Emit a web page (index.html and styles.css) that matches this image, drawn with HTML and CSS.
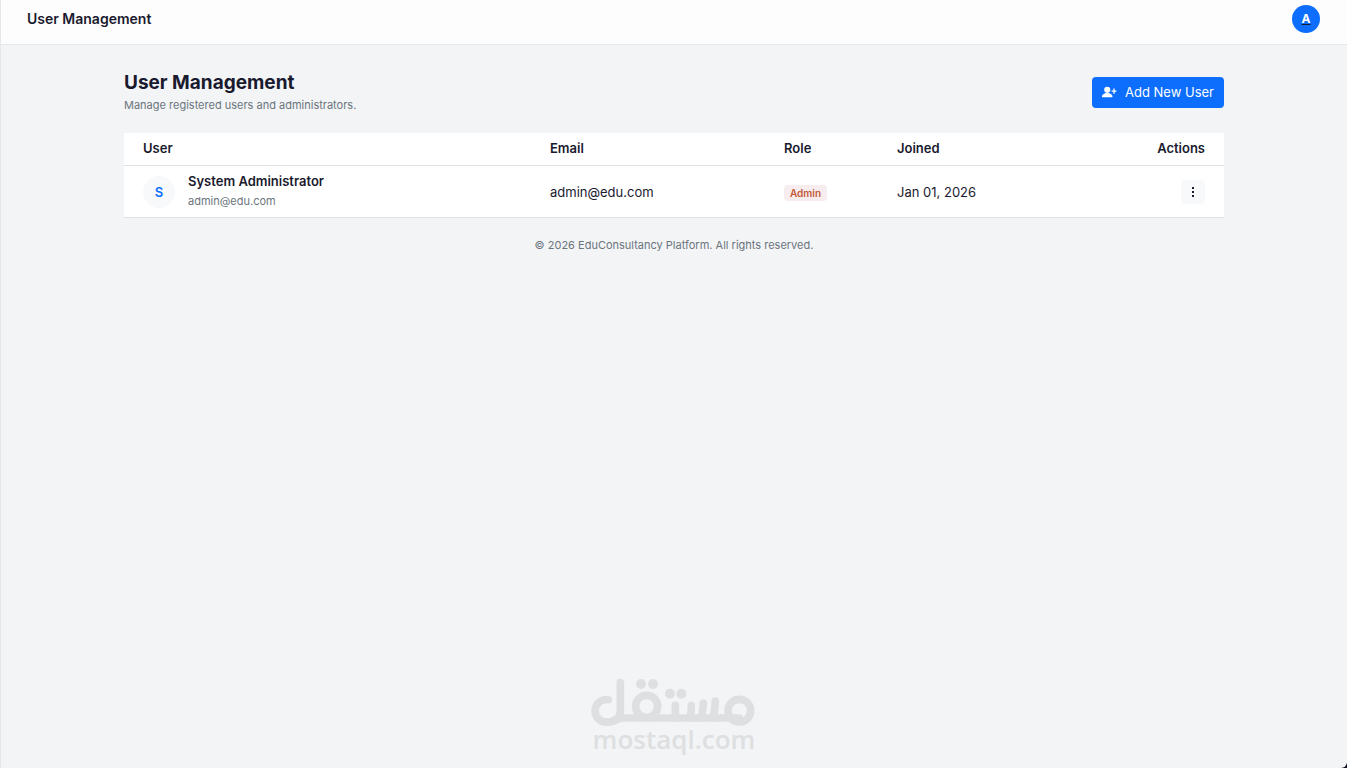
FILE: index.html
```html
<!DOCTYPE html>
<html lang="en">
<head>
<meta charset="utf-8">
<meta name="viewport" content="width=device-width, initial-scale=1">
<title>User Management</title>
<link rel="stylesheet" href="styles.css">
</head>
<body>
<div class="page">
  <header class="topbar">
    <span class="topbar-title">User Management</span>
    <a class="account" href="#"><span class="account-letter">A</span></a>
  </header>
  <main class="content">
    <div class="heading">
      <div>
        <h1 class="title">User Management</h1>
        <p class="subtitle">Manage registered users and administrators.</p>
      </div>
      <button class="add-button" type="button">
        <svg class="add-icon" viewBox="0 0 16 16" aria-hidden="true">
          <path d="M1 14s-1 0-1-1 1-4 6-4 6 3 6 4-1 1-1 1zm5-5a3.500 3.500 0 1 0 0-7 3.500 3.500 0 0 0 0 7"/>
          <path d="M13 4h1.500v2.200H16.500v1.500H14.500V10H13V7.700H11V6.200h2z"/>
        </svg>
        Add New User
      </button>
    </div>
    <table class="users">
      <thead>
        <tr>
          <th class="col-user">User</th>
          <th class="col-email">Email</th>
          <th class="col-role">Role</th>
          <th class="col-joined">Joined</th>
          <th class="col-actions">Actions</th>
        </tr>
      </thead>
      <tbody>
        <tr>
          <td>
            <div class="person">
              <span class="avatar">S</span>
              <div>
                <div class="person-name">System Administrator</div>
                <div class="person-email">admin@edu.com</div>
              </div>
            </div>
          </td>
          <td>admin@edu.com</td>
          <td><span class="badge">Admin</span></td>
          <td>Jan 01, 2026</td>
          <td class="col-actions">
            <button class="menu-button" type="button" aria-label="Actions">
              <svg class="menu-icon" viewBox="0 0 12 12" aria-hidden="true"><path d="M5 1h2v2H5zM5 5h2v2H5zM5 9h2v2H5z"/></svg>
            </button>
          </td>
        </tr>
      </tbody>
    </table>
  </main>
  <footer class="footer">© 2026 EduConsultancy Platform. All rights reserved.</footer>
  <div class="brand">
    <svg class="brand-mark" viewBox="36 24 486 144" role="img" aria-label="مستقل">
      <g fill="none" stroke="currentColor" stroke-width="23" stroke-linecap="round" stroke-linejoin="round">
        <path d="M82 89a34 34 0 1 0 0 67c22 0 36-14 36-36V38"/>
        <path d="M82 156c18 0 24-12 44-12H475"/>
        <circle cx="197" cy="109" r="33"/>
        <path d="M283 106v38M325 144q6-8 6-38M361 144q4-14 6-44M396 144q5-18 7-51"/>
        <circle cx="475" cy="122" r="34"/>
      </g>
      <g fill="currentColor">
        <circle cx="180" cy="42" r="15"/><circle cx="216" cy="42" r="15"/>
        <circle cx="267" cy="71" r="15"/><circle cx="301" cy="71" r="15"/>
      </g>
    </svg>
    <span class="brand-name">mostaql.com</span>
  </div>
</div>
</body>
</html>
```

FILE: styles.css
```css
* { box-sizing: border-box; }

body {
  margin: 0;
  background: #12122a;
  color: #1a1a2e;
  font: 13px/20px Inter, "Liberation Sans", sans-serif;
}

.page {
  display: flex;
  flex-direction: column;
  min-height: 100vh;
  background: #f2f4f6;
  border-left: 1px solid #e5e7eb;
  border-bottom-right-radius: 6px;
}

.topbar {
  display: flex;
  align-items: center;
  justify-content: space-between;
  padding: 5px 27px 11px 26px;
  background: #fdfdfd;
  border-bottom: 1px solid #e5e7eb;
}

.topbar-title { font-size: 14px; font-weight: 600; }

.account {
  display: flex;
  align-items: center;
  justify-content: center;
  width: 28px;
  height: 28px;
  border-radius: 50%;
  background: #0d6efd;
  color: #1a1a2e;
}

.account-letter {
  color: #fff;
  font-size: 12px;
  font-weight: 700;
}

.content {
  width: 100%;
  max-width: 1140px;
  margin: 0 auto;
  padding: 24px 20px 0;
}

.heading {
  display: flex;
  align-items: center;
  justify-content: space-between;
  margin-bottom: 18px;
}

.title {
  margin: 0;
  font-size: 19px;
  line-height: 28px;
  font-weight: 700;
}

.subtitle {
  margin: 0;
  padding-bottom: 1px;
  font-size: 11px;
  line-height: 17px;
  color: #6c757d;
}

.add-button {
  display: flex;
  align-items: center;
  gap: 9px;
  height: 31px;
  padding: 0 10px;
  border: 0;
  border-radius: 4px;
  background: #0d6efd;
  color: #fff;
  font: inherit;
}

.add-icon {
  width: 14px;
  height: 14px;
  fill: currentColor;
  overflow: visible;
}

.users {
  width: 100%;
  border-collapse: collapse;
  table-layout: fixed;
  background: #fff;
  text-align: left;
}

.users th,
.users td {
  padding: 5px 0;
  border-bottom: 1px solid #dee2e6;
}

.users th {
  padding-bottom: 7px;
  font-weight: 600;
}

.users th:first-child,
.users td:first-child { padding-left: 19px; }

.users th:last-child,
.users td:last-child { padding-right: 19px; }

.col-user { width: 426px; }
.col-email { width: 234px; }
.col-role { width: 113px; }
.users .col-actions { text-align: right; }

.person { display: flex; align-items: center; gap: 13px; }
.person-name { font-weight: 600; }
.person-email { font-size: 11px; line-height: 21px; color: #6c757d; }

.avatar {
  display: flex;
  align-items: center;
  justify-content: center;
  width: 32px;
  height: 32px;
  border-radius: 50%;
  background: #f8f9fa;
  color: #0d6efd;
  font-weight: 600;
}

.badge {
  display: inline-block;
  padding: 0 6px;
  border-radius: 4px;
  background: #f7ecee;
  color: #c45a38;
  font-size: 10px;
  line-height: 16px;
  font-weight: 600;
}

.menu-button {
  display: inline-flex;
  align-items: center;
  justify-content: center;
  width: 24px;
  height: 24px;
  padding: 0;
  border: 0;
  border-radius: 4px;
  background: #f8f9fa;
  color: #1a1a2e;
  vertical-align: middle;
}

.menu-icon { width: 12px; height: 12px; fill: currentColor; }

.footer {
  padding: 17px 16px;
  color: #6c757d;
  font-size: 11px;
  text-align: center;
}

.brand {
  display: flex;
  flex-direction: column;
  align-items: center;
  margin-top: auto;
  padding-bottom: 16px;
  color: #dedfe1;
}

.brand-mark { width: 162px; height: 48px; overflow: visible; }

.brand-name {
  font-family: "Open Sans", "Liberation Sans", sans-serif;
  font-size: 26px;
  line-height: 26px;
  font-weight: 600;
}
```
